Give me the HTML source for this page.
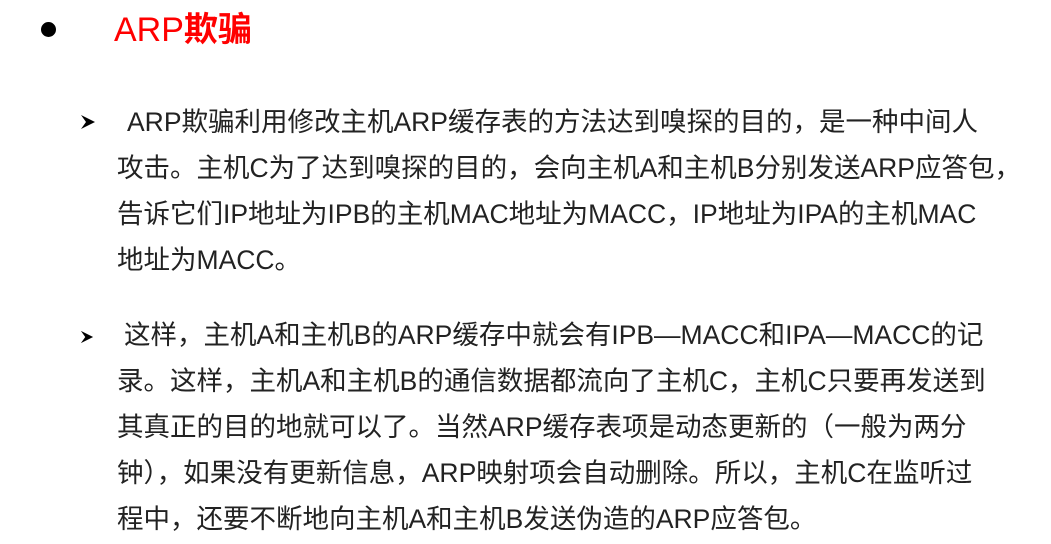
<!DOCTYPE html>
<html><head><meta charset="utf-8"><style>
body{margin:0;width:1051px;height:544px;background:#fff;position:relative;overflow:hidden;font-family:"Liberation Sans","Noto Sans CJK SC",sans-serif;color:#222}
.l{position:absolute;white-space:nowrap;font-size:26.5px;line-height:30px}
.dot{position:absolute;left:41px;top:22px;width:15px;height:15px;border-radius:50%;background:#000}
.t{position:absolute;left:114px;top:10px;font-size:34px;line-height:40px;color:#f00;white-space:nowrap}
.ar{position:absolute;font-size:18px;color:#000}
</style></head><body>
<div class="dot"></div>
<div class="t">ARP<b>欺骗</b></div>
<svg class="ar" style="left:80px;top:114px" width="16" height="16" viewBox="0 0 16 16"><path d="M1 1 L15 8 L1 15 L6 8 Z" fill="#000"/></svg>
<div class="l" style="left:127px;top:107px">ARP欺骗利用修改主机ARP缓存表的方法达到嗅探的目的，是一种中间人</div>
<div class="l" style="left:117px;top:153px">攻击。主机C为了达到嗅探的目的，会向主机A和主机B分别发送ARP应答包，</div>
<div class="l" style="left:117px;top:199px">告诉它们IP地址为IPB的主机MAC地址为MACC，IP地址为IPA的主机MAC</div>
<div class="l" style="left:117px;top:245px">地址为MACC。</div>
<svg class="ar" style="left:80px;top:330px" width="14" height="14" viewBox="0 0 16 16"><path d="M1 1 L15 8 L1 15 L6 8 Z" fill="#000"/></svg>
<div class="l" style="left:124px;top:320px">这样，主机A和主机B的ARP缓存中就会有IPB—MACC和IPA—MACC的记</div>
<div class="l" style="left:117px;top:366px">录。这样，主机A和主机B的通信数据都流向了主机C，主机C只要再发送到</div>
<div class="l" style="left:117px;top:412px">其真正的目的地就可以了。当然ARP缓存表项是动态更新的（一般为两分</div>
<div class="l" style="left:117px;top:458px">钟），如果没有更新信息，ARP映射项会自动删除。所以，主机C在监听过</div>
<div class="l" style="left:117px;top:504px">程中，还要不断地向主机A和主机B发送伪造的ARP应答包。</div>
</body></html>
